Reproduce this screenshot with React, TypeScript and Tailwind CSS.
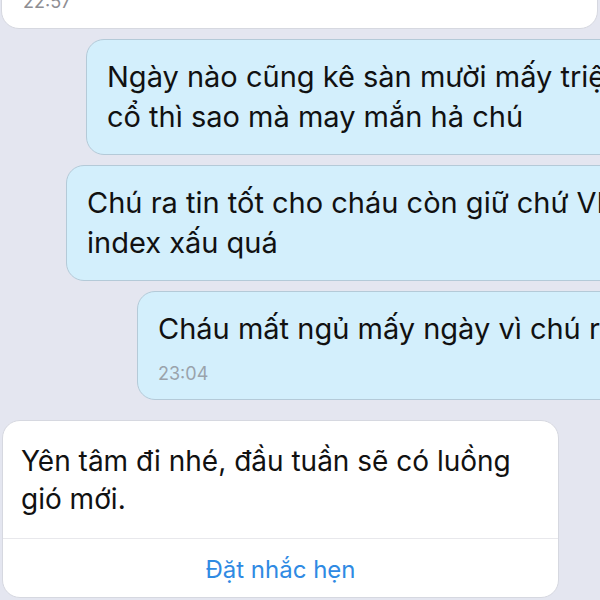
import React from 'react';

const font = { fontFamily: 'Inter, "Noto Sans", sans-serif' };

function OutBubble({ ml, lines, time }: { ml: string; lines: string[]; time?: string }) {
  return (
    <div className={`${ml} shrink-0 w-[700px] rounded-[18px] border border-[#b4cad8] bg-[#d3effc] pl-[20px] pt-[17px] pb-[17px]`}>
      <div className="text-[29px] leading-[40px] text-[#111] whitespace-nowrap">
        {lines.map((l, i) => (
          <div key={i}>{l}</div>
        ))}
      </div>
      {time && <div className="text-[18px] leading-[22px] text-[#9aa3ab] mt-[14px] -mb-[3px]">{time}</div>}
    </div>
  );
}

export default function App() {
  return (
    <div className="w-[600px] h-[600px] overflow-hidden bg-[#e4e6f0] flex flex-col" style={font}>
      <div className="shrink-0 -mt-[32px] ml-[1px] w-[597px] h-[61px] rounded-b-[18px] bg-white border border-[#d6d8e0] pl-[21px] pt-[21px]">
        <span className="text-[18px] leading-[22px] text-[#8e8e93]">22:57</span>
      </div>
      <div className="h-[10px] shrink-0" />
      <OutBubble ml="ml-[86px]" lines={['Ngày nào cũng kê sàn mười mấy triệu', 'cổ thì sao mà may mắn hả chú']} />
      <div className="h-[10px] shrink-0" />
      <OutBubble ml="ml-[66px]" lines={['Chú ra tin tốt cho cháu còn giữ chứ VN', 'index xấu quá']} />
      <div className="h-[10px] shrink-0" />
      <OutBubble ml="ml-[137px]" lines={['Cháu mất ngủ mấy ngày vì chú rồi']} time="23:04" />
      <div className="h-[20px] shrink-0" />
      <div className="shrink-0 ml-[2px] w-[557px] rounded-[18px] bg-white border border-[#d6d8e0] flex flex-col">
        <div className="px-[18px] pt-[21px] pb-[20px] text-[28px] leading-[38px] text-[#111]">
          <div>Yên tâm đi nhé, đầu tuần sẽ có luồng</div>
          <div>gió mới.</div>
        </div>
        <div className="h-px bg-[#e8e8ec]" />
        <div className="h-[58px] flex items-center justify-center text-[24px] text-[#2f8ae3] pt-[4px]">Đặt nhắc hẹn</div>
      </div>
    </div>
  );
}
